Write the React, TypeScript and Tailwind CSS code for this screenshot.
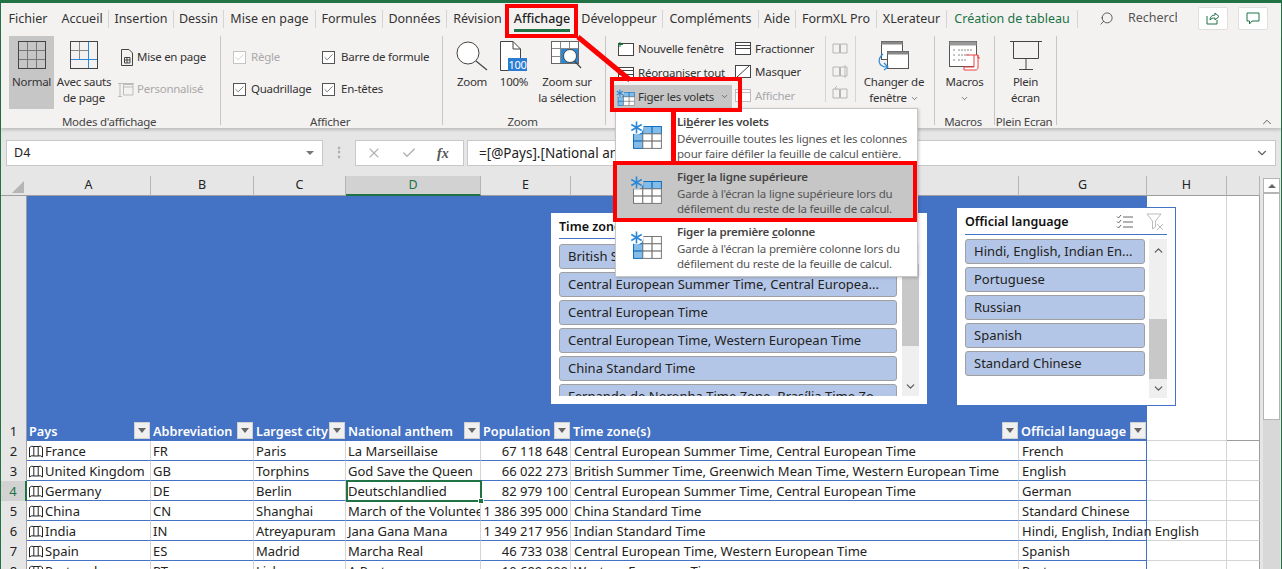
import { ChevronDown, ChevronUp, Search, X, Check } from "lucide-react";

const font = "[font-family:'Noto_Sans',sans-serif]";

const tabs = [
  { label: "Fichier", w: "w-[48px]" },
  { label: "Accueil", w: "w-[57px] pl-[4px]", sep: true },
  { label: "Insertion", w: "w-[65px]", sep: true },
  { label: "Dessin", w: "w-[50px]", sep: true },
  { label: "Mise en page", w: "w-[92px]", sep: true },
  { label: "Formules", w: "w-[67px]", sep: true },
  { label: "Données", w: "w-[64px]", sep: true },
  { label: "Révision", w: "w-[61px]" },
  { label: "Affichage", w: "w-[68px]", active: true },
  { label: "Développeur", w: "w-[87px]", sep: true },
  { label: "Compléments", w: "w-[96px]", sep: true },
  { label: "Aide", w: "w-[37px]", sep: true },
  { label: "FormXL Pro", w: "w-[81px]", sep: true },
  { label: "XLerateur", w: "w-[70px]", sep: true },
  { label: "Création de tableau", w: "w-[131px]", sep: true, green: true },
];

const rows = [
  ["France", "FR", "Paris", "La Marseillaise", "67 118 648", "Central European Summer Time, Central European Time", "French"],
  ["United Kingdom", "GB", "Torphins", "God Save the Queen", "66 022 273", "British Summer Time, Greenwich Mean Time, Western European Time", "English"],
  ["Germany", "DE", "Berlin", "Deutschlandlied", "82 979 100", "Central European Summer Time, Central European Time", "German"],
  ["China", "CN", "Shanghai", "March of the Volunteers", "1 386 395 000", "China Standard Time", "Standard Chinese"],
  ["India", "IN", "Atreyapuram", "Jana Gana Mana", "1 349 217 956", "Indian Standard Time", "Hindi, English, Indian English"],
  ["Spain", "ES", "Madrid", "Marcha Real", "46 733 038", "Central European Time, Western European Time", "Spanish"],
  ["Portugal", "PT", "Lisbon", "A Portuguesa", "10 699 000", "Western European Time", "Portuguese"],
];

const headers = ["Pays", "Abbreviation", "Largest city", "National anthem", "Population", "Time zone(s)", "Official language"];
const cols = "grid grid-cols-[26px_124px_103px_92px_135px_90px_448px_128px_80px_33px]";

function Chk({ on = true, off = false }: { on?: boolean; off?: boolean }) {
  return (
    <span className={`w-[13px] h-[13px] border flex items-center justify-center bg-white ${off ? "border-[#c4c4c4]" : "border-[#555]"}`}>
      {on && <Check size={11} strokeWidth={1.4} className={off ? "text-[#b8b8b8]" : "text-[#333]"} />}
    </span>
  );
}

function GridIcon() {
  return (
    <svg width="28" height="28" viewBox="0 0 28 28" fill="none">
      <rect x="0.5" y="0.5" width="27" height="27" stroke="#444" />
      <path d="M9.5 1V27M18.5 1V27M1 9.5H27M1 18.5H27" stroke="#777" />
    </svg>
  );
}

function BreakIcon() {
  return (
    <svg width="28" height="28" viewBox="0 0 28 28" fill="none">
      <rect x="0.5" y="0.5" width="27" height="27" stroke="#444" />
      <path d="M9.5 1V18M1 9.5H18" stroke="#888" />
      <path d="M18.5 1V27M1 18.5H27" stroke="#2b88d8" />
    </svg>
  );
}

function ZoomIcon() {
  return (
    <svg width="32" height="30" viewBox="0 0 32 30" fill="none" stroke="#444">
      <circle cx="12" cy="12" r="11" fill="#fff" />
      <path d="M20 20L31 29" strokeWidth="1.2" />
    </svg>
  );
}

function HundredIcon() {
  return (
    <span className="relative block w-[28px] h-[30px]">
      <svg width="22" height="30" viewBox="0 0 22 30" fill="none" stroke="#444">
        <path d="M0.5 0.5H13L20.5 8V29.5H0.5Z" fill="#fff" />
        <path d="M13 0.5V8H20.5" />
      </svg>
      <span className="absolute left-[8px] top-[17px] w-[19px] h-[13px] bg-[#2b7cd3] text-white text-[11px] leading-[13px] text-center">100</span>
    </span>
  );
}

function ZoomSelIcon() {
  return (
    <svg width="32" height="30" viewBox="0 0 32 30" fill="none">
      <rect x="0.5" y="0.5" width="27" height="22" fill="#fff" stroke="#666" />
      <path d="M9.5 1V22M18.5 1V22M1 7.5H27M1 15.5H27" stroke="#888" />
      <rect x="10" y="8" width="17" height="14" fill="#2b88d8" />
      <circle cx="19" cy="15" r="6.5" fill="#fff" stroke="#444" />
      <path d="M23.5 20L30 27" stroke="#444" strokeWidth="1.2" />
    </svg>
  );
}

function SwitchIcon() {
  return (
    <svg width="32" height="30" viewBox="0 0 32 30" fill="none">
      <rect x="3.5" y="0.5" width="21" height="18" fill="#fff" stroke="#555" />
      <rect x="3.5" y="0.5" width="21" height="3" fill="#888" />
      <rect x="9.5" y="10.5" width="21" height="17" fill="#fff" stroke="#555" />
      <rect x="9.5" y="10.5" width="21" height="3" fill="#888" />
      <path d="M5 13C-1 18 0 26 9 26M6 22L10 26L6 29" stroke="#2b88d8" strokeWidth="1.2" />
    </svg>
  );
}

function MacroIcon() {
  return (
    <svg width="32" height="30" viewBox="0 0 32 30" fill="none">
      <rect x="0.5" y="0.5" width="27" height="25" fill="#fff" stroke="#555" />
      <rect x="0.5" y="0.5" width="27" height="4" fill="#999" />
      <path d="M4 9h3M9 9h14M4 14h3M9 14h11M4 19h3M9 19h9" stroke="#888" strokeDasharray="2 1" />
      <path d="M17 14H29V17H31M29 14V26C29 29 27 29 27 29H15V26H25V14" fill="#fff" stroke="#e84040" />
    </svg>
  );
}

function ScreenIcon() {
  return (
    <svg width="32" height="30" viewBox="0 0 32 30" fill="none" stroke="#444">
      <path d="M0 0.5H32M3.5 0.5V17.5H28.5V0.5M16 18V28M9 28.5H23" />
    </svg>
  );
}

function SmallWin({ kind, grey }: { kind: string; grey?: boolean }) {
  const c = grey ? "#bdbdbd" : "#444";
  return (
    <svg width="17" height="15" viewBox="0 0 17 15" fill="none" stroke={c}>
      <rect x="0.5" y="1.5" width="15" height="12" fill="#fff" />
      {kind === "new" && <path d="M2 0V5M-1 2.5H5" stroke="#107c41" />}
      {kind === "split" && <path d="M1 7.5H15M1 4.5H15" />}
      {kind === "arrange" && <path d="M1 4.5H15M1 8.5H15" />}
      {kind === "hide" && <path d="M2 13L14 2" />}
      {kind === "show" && <path d="M1 4.5H15" />}
    </svg>
  );
}

function BookIcon({ kind }: { kind: string }) {
  return (
    <svg width="16" height="15" viewBox="0 0 16 15" fill="none" stroke="#b5b5b5">
      <path d="M1 3H7.5V12H1ZM8.5 3H15V12H8.5Z" />
      {kind === "sync" && <path d="M13 1V14" stroke="#bbb" />}
      {kind === "back" && <path d="M3 2L5 0M3 2L5 4" />}
    </svg>
  );
}

function FreezeIcon({ blue, small, onGrey }: { blue: number[]; small?: boolean; onGrey?: boolean }) {
  const cells = [0, 1, 2, 3, 4, 5, 6, 7, 8];
  return (
    <svg width={small ? 19 : 32} height={small ? 18 : 30} viewBox="0 0 32 30" fill="none">
      <g transform="translate(3 7)">
        {cells.map((i) => (
          <rect
            key={i}
            x={(i % 3) * 9.3 + 0.5}
            y={Math.floor(i / 3) * 7.3 + 0.5}
            width="9.3"
            height="7.3"
            fill={blue.includes(i) ? "#83bbe9" : "#fff"}
            stroke={blue.includes(i) ? "#106ebe" : "#777"}
          />
        ))}
      </g>
      <circle cx="6.5" cy="8.5" r="7" fill={onGrey ? "#c6c6c6" : "#fff"} />
      <path d="M6.5 2.5V14.5M1.3 5.5L11.7 11.5M1.3 11.5L11.7 5.5" stroke="#2b88d8" strokeWidth={small ? 2 : 1.6} />
    </svg>
  );
}

function BigBtn({ icon, lines, w, chevron, active, big }: { icon: React.ReactNode; lines: string[]; w: string; chevron?: boolean; active?: boolean; big?: boolean }) {
  return (
    <div className={`${w} h-[73px] flex flex-col items-center ${active ? "bg-[#c6c6c6]" : ""}`}>
      <div className="h-[38px] pt-[5px] flex justify-center">{icon}</div>
      {lines.map((l, i) => (
        <div key={l} className="h-[16px] leading-[16px] whitespace-nowrap flex items-center">
          {l}
          {chevron && i === lines.length - 1 && <ChevronDown size={9} strokeWidth={1.6} className="ml-[3px]" />}
        </div>
      ))}
      {big && <ChevronDown size={9} strokeWidth={1.6} className="mt-[4px]" />}
    </div>
  );
}

function Group({ w, label, children }: { w: string; label?: string; children: React.ReactNode }) {
  return (
    <div className={`${w} h-[89px] flex flex-col border-r border-[#c8c6c4] shrink-0`}>
      <div className="h-[76px] shrink-0 flex">{children}</div>
      <div className="h-[16px] shrink-0 text-center leading-[13px] pt-[3px] text-[#444] whitespace-nowrap">{label}&nbsp;</div>
    </div>
  );
}

function Row({ icon, label, grey, chevron, className = "" }: { icon: React.ReactNode; label?: string; grey?: boolean; chevron?: boolean; className?: string }) {
  return (
    <div className={`h-[18px] flex items-center gap-[3px] whitespace-nowrap ${grey ? "text-[#a9a9a9]" : ""} ${className}`}>
      {icon}
      {label && <span>{label}</span>}
      {chevron && <ChevronDown size={9} strokeWidth={1.6} className="ml-[3px]" />}
    </div>
  );
}

function FilterBtn() {
  return (
    <span className="absolute right-[1px] bottom-[2px] w-[16px] h-[17px] bg-[#f0f0f0] border border-[#d0d0d0] flex items-center justify-center">
      <span className="w-0 h-0 border-x-[4px] border-x-transparent border-t-[5px] border-t-[#666]" />
    </span>
  );
}

function MapIcon() {
  return (
    <svg width="14" height="13" viewBox="0 0 14 13" fill="none" stroke="#222" className="shrink-0 mr-[2px]">
      <path d="M0.5 2.5Q2.5 0.5 4.8 1.5V11Q2.5 10 0.5 12ZM4.8 1.5H9.2V11H4.8M9.2 1.5Q11.5 0.5 13.5 2.5V12Q11.5 10 9.2 11" />
    </svg>
  );
}

function SlicerItem({ label, w }: { label: string; w: string }) {
  return (
    <div className={`${w} h-[25px] shrink-0 rounded-[3px] border border-[#a0a0a0] bg-[#b4c6e7] pl-[8px] text-[13px] leading-[23px] whitespace-nowrap overflow-hidden text-[#222]`}>
      {label}
    </div>
  );
}

function SlicerScroll({ thumb }: { thumb: string }) {
  return (
    <div className="absolute bg-[#efefef] flex flex-col items-center justify-between inset-y-0 right-0 w-full">
      <ChevronUp size={13} strokeWidth={2.2} className="text-[#555] mt-[5px]" />
      <div className={`absolute left-0 w-full bg-[#c8c8c8] ${thumb}`} />
      <ChevronDown size={13} strokeWidth={2.2} className="text-[#555] mb-[3px] relative" />
    </div>
  );
}

function MenuItem({ title, u, rest, l1, l2, blue, active }: { title: string; u: string; rest: string; l1: string; l2: string; blue: number[]; active?: boolean }) {
  return (
    <div className={`h-[55px] flex ${active ? "bg-[#c6c6c6]" : ""}`}>
      <div className="w-[61px] pl-[14px] pt-[10px] shrink-0">
        <FreezeIcon blue={blue} onGrey={active} />
      </div>
      <div className="pt-[5px] text-[11.5px] tracking-[-0.2px] leading-[15px] text-[#555] whitespace-nowrap">
        <div className="font-semibold text-[#444] mb-[2px]">
          {title}
          <span className="underline">{u}</span>
          {rest}
        </div>
        <div>{l1}</div>
        <div>{l2}</div>
      </div>
    </div>
  );
}

export default function App() {
  return (
    <div className={`relative w-[1282px] h-[569px] overflow-hidden text-[12.5px] text-[#333] ${font}`}>
      <div className="h-full flex flex-col border-x border-[#217346] bg-[#e6e6e6]">
        <div className="h-[3px] bg-[#217346] shrink-0" />

        {/* ribbon tabs */}
        <div className="h-[33px] shrink-0 bg-[#f3f2f1] flex items-center pl-[3px] pb-[2px] relative">
          {tabs.map((t) => (
            <div key={t.label} className={`${t.w} h-[18px] leading-[18px] text-center whitespace-nowrap relative ${t.sep ? "border-r border-[#d4d4d4]" : ""} ${t.green ? "text-[#217346]" : ""} ${t.active ? "font-medium text-[#222]" : ""}`}>
              {t.label}
              {t.active && <span className="absolute left-[6px] right-[6px] top-[19px] h-[3px] bg-[#217346]" />}
            </div>
          ))}
          <Search size={15} strokeWidth={1.2} className="ml-[21px] -scale-x-100" />
          <div className="ml-[14px] w-[49px] overflow-hidden whitespace-nowrap text-[#555]">Rechercher</div>
          <div className="ml-[21px] w-[30px] h-[23px] bg-white border border-[#e1dfdd] rounded-[2px] flex items-center justify-center">
            <svg width="14" height="13" viewBox="0 0 14 13" fill="none" stroke="#217346">
              <path d="M1 4V12H11V8M4 8C4 5 6 3 9 3V1L13 4.5L9 8V6C7 6 5 6.5 4 8Z" />
            </svg>
          </div>
          <div className="ml-[10px] w-[30px] h-[23px] bg-white border border-[#e1dfdd] rounded-[2px] flex items-center justify-center">
            <svg width="14" height="13" viewBox="0 0 14 13" fill="none" stroke="#217346">
              <path d="M1 1H13V9H6L3.5 12V9H1Z" />
            </svg>
          </div>
        </div>

        {/* ribbon */}
        <div className="h-[92px] shrink-0 bg-[#f3f2f1] flex relative z-10 text-[11.5px] tracking-[-0.25px] shadow-[0_2px_3px_rgba(0,0,0,0.18)]">
          <Group w="w-[220px]" label="Modes d'affichage">
            <div className="pl-[8px] flex">
              <BigBtn icon={<GridIcon />} lines={["Normal"]} w="w-[45px]" active />
              <BigBtn icon={<BreakIcon />} lines={["Avec sauts", "de page"]} w="w-[60px]" />
              <div className="pl-[6px] pt-[12px] flex flex-col gap-[14px]">
                <Row
                  label="Mise en page"
                  icon={
                    <svg width="14" height="17" viewBox="0 0 14 17" fill="none" stroke="#444">
                      <path d="M1.5 0.5H9L12.5 4V16.5H1.5Z" />
                      <path d="M4.5 8.5H10V14H4.5ZM7 8.5V14M4.5 11H10" />
                    </svg>
                  }
                />
                <Row
                  grey
                  label="Personnalisé"
                  icon={
                    <svg width="16" height="17" viewBox="0 0 16 17" fill="none" stroke="#bbb" className="-ml-[2px]">
                      <path d="M0 2.5H16M0 15.5H4M2 2.5V15.5M5.5 3.5H15V14H5.5ZM5.5 6H15" />
                    </svg>
                  }
                />
              </div>
            </div>
          </Group>
          <Group w="w-[222px]" label="Afficher">
            <div className="pl-[12px] pt-[12px] flex flex-col gap-[14px] w-[101px]">
              <Row grey label="Règle" icon={<Chk off />} className="gap-[5px]" />
              <Row label="Quadrillage" icon={<Chk />} className="gap-[5px]" />
            </div>
            <div className="pt-[12px] flex flex-col gap-[14px]">
              <Row label="Barre de formule" icon={<Chk />} className="gap-[6px]" />
              <Row label="En-têtes" icon={<Chk />} className="gap-[6px]" />
            </div>
          </Group>
          <Group w="w-[163px]" label="Zoom">
            <div className="pl-[9px] flex">
              <BigBtn icon={<ZoomIcon />} lines={["Zoom"]} w="w-[40px]" />
              <BigBtn icon={<HundredIcon />} lines={["100%"]} w="w-[44px]" />
              <BigBtn icon={<ZoomSelIcon />} lines={["Zoom sur", "la sélection"]} w="w-[62px]" />
            </div>
          </Group>
          <Group w="w-[329px]">
            <div className="pl-[8px] pt-[4px] flex flex-col gap-[6px] w-[129px]">
              <Row label="Nouvelle fenêtre" icon={<SmallWin kind="new" />} className="pl-[4px] gap-[2px]" />
              <Row label="Réorganiser tout" icon={<SmallWin kind="arrange" />} className="pl-[4px] gap-[2px]" />
              <Row label="Figer les volets" chevron icon={<FreezeIcon small onGrey blue={[0, 3, 6, 1, 2]} />} className="h-[23px] -mt-[3px] w-[118px] bg-[#c6c6c6] pl-[2px] gap-0" />
            </div>
            <div className="pt-[4px] flex flex-col gap-[6px] w-[91px] border-r border-[#d4d4d4] h-[66px]">
              <Row label="Fractionner" icon={<SmallWin kind="split" />} />
              <Row label="Masquer" icon={<SmallWin kind="hide" />} />
              <Row grey label="Afficher" icon={<SmallWin kind="show" grey />} />
            </div>
            <div className="pl-[6px] pt-[4px] flex flex-col gap-[6px] w-[30px] border-r border-[#d4d4d4] h-[66px]">
              <Row icon={<BookIcon kind="side" />} />
              <Row icon={<BookIcon kind="sync" />} />
              <Row icon={<BookIcon kind="back" />} />
            </div>
            <BigBtn icon={<SwitchIcon />} lines={["Changer de", "fenêtre"]} w="w-[76px]" chevron />
          </Group>
          <Group w="w-[60px]" label="Macros">
            <BigBtn icon={<MacroIcon />} lines={["Macros"]} w="w-full" big />
          </Group>
          <Group w="w-[62px]" label="Plein Ecran">
            <BigBtn icon={<ScreenIcon />} lines={["Plein", "écran"]} w="w-full" />
          </Group>
          <ChevronUp size={14} strokeWidth={1.3} className="absolute right-[7px] bottom-[-1px]" />
        </div>

        {/* formula bar */}
        <div className="h-[48px] shrink-0 flex items-start pt-[12px] pl-[5px] pr-[5px] text-[13.5px]">
          <div className="w-[317px] h-[26px] bg-white border border-[#c8c8c8] flex items-center justify-between pl-[7px] pr-[8px] text-[#222] text-[12.5px]">
            D4
            <span className="w-0 h-0 border-x-[4px] border-x-transparent border-t-[4px] border-t-[#777]" />
          </div>
          <div className="w-[32px] h-[26px] text-center leading-[24px] text-[#aaa] font-bold">⋮</div>
          <div className="w-[109px] h-[26px] bg-white border border-[#c8c8c8] flex items-center gap-[19px] pl-[10px]">
            <X size={16} strokeWidth={1.6} className="text-[#b0b0b0]" />
            <Check size={16} strokeWidth={2} className="text-[#b0b0b0]" />
            <span className="italic font-semibold font-['Liberation_Serif',serif] text-[#555] text-[14px] ml-[1px]">fx</span>
          </div>
          <div className="ml-[3px] flex-1 h-[26px] bg-white border border-[#c8c8c8] flex items-center justify-between pl-[11px] pr-[6px] text-[#222]">
            =[@Pays].[National anthem]
            <ChevronDown size={14} strokeWidth={2} className="text-[#666]" />
          </div>
        </div>

        {/* sheet */}
        <div className="flex-1 flex min-h-0">
          <div className="w-[1259px] shrink-0 overflow-hidden">
            <div className={`${cols} h-[20px] bg-[#e6e6e6] text-[#222]`}>
              <div className="relative border-b border-[#9e9e9e]">
                <span className="absolute right-[3px] bottom-[2px] w-0 h-0 border-l-[12px] border-l-transparent border-b-[12px] border-b-[#b5b5b5]" />
              </div>
              {["A", "B", "C", "D", "E", "F", "G", "H", ""].map((c) => (
                <div key={c || "I"} className={`text-center leading-[18px] border-r border-[#b5b5b5] ${c === "D" ? "bg-[#d2d2d2] border-b-2 border-b-[#217346] text-[#217346]" : "border-b border-b-[#9e9e9e]"}`}>
                  {c}
                </div>
              ))}
            </div>

            <div className={`${cols} h-[245px]`}>
              <div className="bg-[#e6e6e6] border-r border-[#9e9e9e] flex items-end justify-center pb-[1px] leading-[18px] text-[13px] text-[#222]">1</div>
              {headers.map((h) => (
                <div key={h} className="relative bg-[#4472c4] pl-[2px] pb-[1px] flex items-end text-white text-[12.7px] font-semibold leading-[18px] whitespace-nowrap">
                  {h}
                  <FilterBtn />
                </div>
              ))}
              <div className="bg-white border-r border-b border-[#d4d4d4]" />
              <div className="bg-white border-r border-b border-[#9e9e9e]" />
            </div>

            {rows.map((r, ri) => {
              const sel = ri === 2;
              return (
                <div key={r[0]} className={`${cols} h-[20px] text-[13px] leading-[18px] text-[#222]`}>
                  <div className={`text-center pt-[1px] border-r ${sel ? "bg-[#d2d2d2] border-r-2 border-r-[#217346] text-[#217346]" : "bg-[#e6e6e6] border-[#9e9e9e]"}`}>{ri + 2}</div>
                  {r.map((v, ci) => (
                    <div
                      key={ci}
                      className={`relative bg-white whitespace-nowrap pt-[1px] border-b border-b-[#4472c4] ${ci >= 5 ? "pl-[3px]" : "pl-[2px]"} ${ci === 6 ? "border-r border-r-[#4472c4] z-[1]" : "overflow-hidden border-r border-r-[#d4d4d4]"} ${ci === 0 ? "flex items-center" : ""} ${ci === 4 ? "text-right pr-[2px]" : ""}`}
                    >
                      {ci === 0 && <MapIcon />}
                      {v}
                    </div>
                  ))}
                  <div className="bg-white border-r border-b border-[#d4d4d4]" />
                  <div className="bg-white border-r border-b border-[#d4d4d4] border-r-[#9e9e9e]" />
                </div>
              );
            })}
          </div>

          {/* vertical scrollbar */}
          <div className="w-[17px] ml-[3px] shrink-0 bg-[#d8d8d8] flex flex-col">
            <div className="h-[2px] bg-[#e6e6e6]" />
            <div className="h-[15px] bg-white border border-[#b5b5b5] flex items-center justify-center">
              <span className="w-0 h-0 border-x-[4px] border-x-transparent border-b-[4px] border-b-[#666]" />
            </div>
            <div className="h-[227px] bg-white border border-[#b5b5b5]" />
          </div>
        </div>
      </div>

      {/* selected cell */}
      <div className="absolute left-[346px] top-[480px] w-[136px] h-[22px] border-2 border-[#217346]">
        <span className="absolute right-[-4px] bottom-[-4px] w-[6px] h-[6px] bg-[#217346] border border-white" />
      </div>

      {/* slicers */}
      <div className="absolute left-[551px] top-[213px] w-[376px] h-[191px] bg-white">
        <div className="absolute left-[8px] top-[5px] font-semibold text-[#111]">Time zone(s)</div>
        <div className="absolute left-[8px] right-[9px] top-[25px] h-px bg-[#4472c4]" />
        <div className="absolute left-[8px] top-[31px] h-[152px] w-[338px] overflow-hidden flex flex-col gap-[3px]">
          <SlicerItem w="w-[338px]" label="British Summer Time, Greenwich Mean Time, Western..." />
          <SlicerItem w="w-[338px]" label="Central European Summer Time, Central Europea..." />
          <SlicerItem w="w-[338px]" label="Central European Time" />
          <SlicerItem w="w-[338px]" label="Central European Time, Western European Time" />
          <SlicerItem w="w-[338px]" label="China Standard Time" />
          <SlicerItem w="w-[338px]" label="Fernando de Noronha Time Zone, Brasília Time Zo..." />
        </div>
        <div className="absolute left-[351px] top-[31px] w-[17px] h-[152px]">
          <SlicerScroll thumb="top-[20px] h-[82px]" />
        </div>
      </div>

      <div className="absolute left-[957px] top-[207px] w-[219px] h-[199px] bg-white border-t border-r border-b border-[#4472c4]">
        <div className="absolute left-[8px] top-[5px] font-semibold text-[#111]">Official language</div>
        <svg width="17" height="16" viewBox="0 0 17 16" fill="none" stroke="#666" className="absolute left-[159px] top-[6px]">
          <path d="M1 2.5L2.5 4L5 1M1 7.5L2.5 9L5 6M1 12.5L2.5 14L5 11M7 3H17M7 8H17M7 13H17" />
        </svg>
        <svg width="18" height="18" viewBox="0 0 18 18" fill="none" stroke="#bbb" className="absolute left-[189px] top-[5px]">
          <path d="M1 1H15L9.5 8V14L6.5 16V8ZM11 11L17 17M17 11L11 17" />
        </svg>
        <div className="absolute left-[8px] right-[8px] top-[26px] h-px bg-[#4472c4]" />
        <div className="absolute left-[8px] top-[31px] flex flex-col gap-[3px]">
          <SlicerItem w="w-[180px]" label="Hindi, English, Indian En..." />
          <SlicerItem w="w-[180px]" label="Portuguese" />
          <SlicerItem w="w-[180px]" label="Russian" />
          <SlicerItem w="w-[180px]" label="Spanish" />
          <SlicerItem w="w-[180px]" label="Standard Chinese" />
        </div>
        <div className="absolute left-[192px] top-[31px] w-[18px] h-[159px]">
          <SlicerScroll thumb="top-[80px] h-[60px]" />
        </div>
      </div>

      {/* freeze panes menu */}
      <div className="absolute left-[615px] top-[108px] w-[303px] h-[169px] bg-white border border-[#c6c6c6] shadow-[1px_1px_3px_rgba(0,0,0,0.2)] z-20">
        <MenuItem title="Li" u="b" rest="érer les volets" l1="Déverrouille toutes les lignes et les colonnes" l2="pour faire défiler la feuille de calcul entière." blue={[0, 1, 2, 3, 6]} />
        <MenuItem active title="Fige" u="r" rest=" la ligne supérieure" l1="Garde à l'écran la ligne supérieure lors du" l2="défilement du reste de la feuille de calcul." blue={[0, 1, 2]} />
        <MenuItem title="Figer la première " u="c" rest="olonne" l1="Garde à l'écran la première colonne lors du" l2="défilement du reste de la feuille de calcul." blue={[0, 3, 6]} />
      </div>

      {/* red annotations */}
      <div className="absolute left-[505px] top-[4px] w-[73px] h-[34px] border-[4px] border-[#ff0000] z-30" />
      <div className="absolute left-[610px] top-[77px] w-[132px] h-[35px] border-[4px] border-[#ff0000] z-30" />
      <div className="absolute left-[613px] top-[161px] w-[304px] h-[61px] border-[4px] border-[#ff0000] z-30" />
      <div className="absolute left-[671px] top-[112px] w-[5px] h-[50px] bg-[#ff0000] z-30" />
      <svg width="70" height="60" viewBox="0 0 70 60" className="absolute left-[570px] top-[30px] z-30">
        <path d="M8 7L60 50" stroke="#ff0000" strokeWidth="5" />
      </svg>
    </div>
  );
}
